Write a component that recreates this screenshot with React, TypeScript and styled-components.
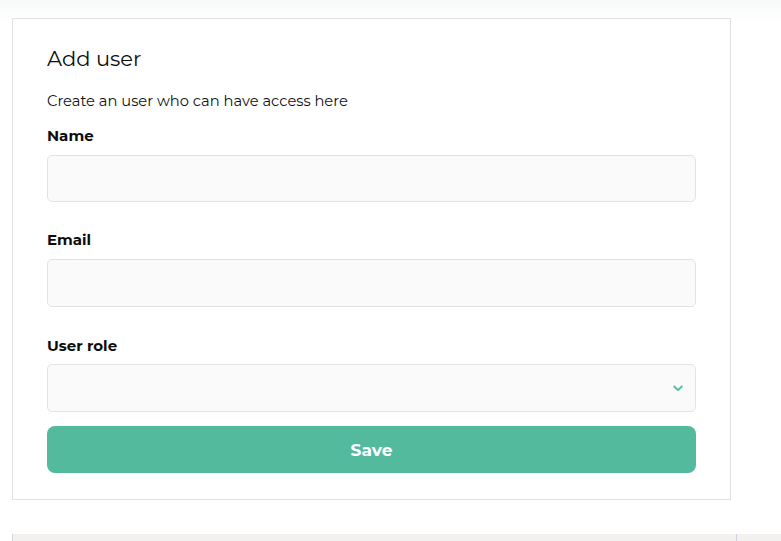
import React from "react";
import styled, { createGlobalStyle } from "styled-components";

const Global = createGlobalStyle`
  html, body { margin: 0; padding: 0; background: #ffffff; overflow: hidden; }
  body { font-family: "Montserrat", "Noto Sans", "Open Sans", sans-serif; color: #111; }
  * { box-sizing: border-box; }
`;

const Page = styled.div`
  width: 781px;
  height: 541px;
  overflow: hidden;
  background: linear-gradient(to bottom, #f8f9f9 0px, #fbfcfc 12px, #ffffff 22px);
  padding: 18px 0 0 12px;
  display: flex;
  flex-direction: column;
  gap: 34px;
`;

const Card = styled.section`
  width: 719px;
  border: 1px solid #e1e1e1;
  background: #ffffff;
  padding: 26px 34px 26px 34px;
  display: flex;
  flex-direction: column;
`;

const Title = styled.h2`
  margin: 0;
  font-size: 21px;
  font-weight: 400;
  line-height: 28px;
  color: #0d0d0d;
`;

const Subtitle = styled.p`
  margin: 19px 0 0;
  font-size: 14.7px;
  line-height: 18px;
  color: #111;
`;

const Label = styled.label<{ $top: number }>`
  display: block;
  margin-top: ${(p) => p.$top}px;
  font-size: 15px;
  font-weight: 700;
  line-height: 18px;
  color: #0d0d0d;
`;

const Input = styled.div<{ $h: number; $gap?: number }>`
  margin-top: ${(p) => p.$gap ?? 10}px;
  height: ${(p) => p.$h}px;
  border: 1px solid #e3e3e3;
  border-radius: 5px;
  background: #fafafa;
  display: flex;
  align-items: center;
  justify-content: flex-end;
  padding-right: 12px;
`;

const SaveButton = styled.button`
  margin-top: 14px;
  height: 47px;
  border: none;
  border-radius: 8px;
  background: #53ba9e;
  color: #ffffff;
  font-family: inherit;
  font-size: 17px;
  font-weight: 700;
  cursor: pointer;
`;

const Table = styled.div`
  display: grid;
  grid-template-columns: 724px 1fr;
  border-left: 1px solid #d6d6e0;
  background: #f2f1f0;
  height: 40px;
`;

const Cell = styled.div<{ $divider?: boolean }>`
  border-right: ${(p) => (p.$divider ? "1px solid #d0d0dc" : "none")};
`;

const Chevron = () => (
  <svg width="10" height="7" viewBox="0 0 10 7" fill="none">
    <path d="M1.2 1.5 L5 5.2 L8.8 1.5" stroke="#53ba9e" strokeWidth="1.8" strokeLinecap="round" strokeLinejoin="round" />
  </svg>
);

export default function App() {
  return (
    <>
      <Global />
      <Page>
        <Card>
          <Title>Add user</Title>
          <Subtitle>Create an user who can have access here</Subtitle>
          <Label $top={17}>Name</Label>
          <Input $h={47} />
          <Label $top={29}>Email</Label>
          <Input $h={48} />
          <Label $top={30}>User role</Label>
          <Input $h={48} $gap={9}>
            <Chevron />
          </Input>
          <SaveButton>Save</SaveButton>
        </Card>
        <Table>
          <Cell $divider />
          <Cell />
        </Table>
      </Page>
    </>
  );
}
